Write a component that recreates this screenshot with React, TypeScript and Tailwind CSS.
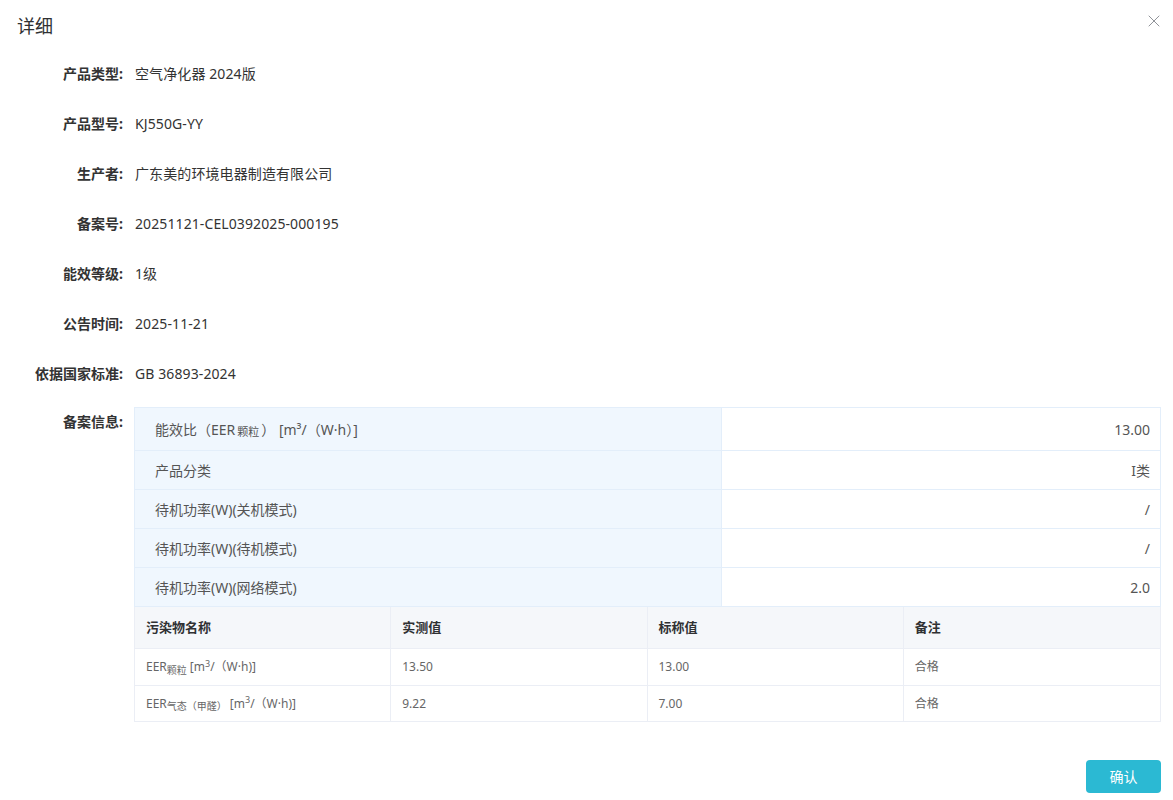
import { X } from 'lucide-react'

const info: [string, string][] = [
  ['产品类型:', '空气净化器 2024版'],
  ['产品型号:', 'KJ550G-YY'],
  ['生产者:', '广东美的环境电器制造有限公司'],
  ['备案号:', '20251121-CEL0392025-000195'],
  ['能效等级:', '1级'],
  ['公告时间:', '2025-11-21'],
  ['依据国家标准:', 'GB 36893-2024'],
]

const specs: [React.ReactNode, string][] = [
  ['产品分类', 'I类'],
  ['待机功率(W)(关机模式)', '/'],
  ['待机功率(W)(待机模式)', '/'],
  ['待机功率(W)(网络模式)', '2.0'],
]

export default function App() {
  return (
    <div
      className="relative w-[1173px] h-[800px] bg-white text-[#333]"
      style={{ fontFamily: '"Noto Sans", "Noto Sans CJK SC", sans-serif' }}
    >
      <div className="h-[48px] pl-[17px] pt-[13px]">
        <h1 className="text-[18px] leading-[26px] text-[#303133]">详细</h1>
      </div>
      <button className="absolute right-[9px] top-[11px] text-[#909399]">
        <X size={20} strokeWidth={1.2} />
      </button>

      {info.map(([label, value]) => (
        <div key={label} className="flex h-[50px] items-center text-[14px]">
          <div className="w-[123px] text-right font-bold text-[#333]">{label}</div>
          <div className="ml-[12px] tracking-[0.1px] text-[#333]">{value}</div>
        </div>
      ))}

      <div className="mt-[9px] flex text-[14px]">
        <div className="w-[123px] pt-[5px] text-right font-bold leading-[20px]">备案信息:</div>
        <div className="ml-[11px] w-[1027px]">
          <div className="border border-b-0 border-[#e3eefa] text-[#555]">
            <div className="flex h-[43px] border-b border-[#e3eefa]">
              <div className="flex w-[587px] items-center border-r border-[#e3eefa] bg-[#f0f7fe] pl-[20px]">
                能效比（EER <sub className="mx-[2px] text-[11px]">颗粒</sub> ） [m³/（W·h）]
              </div>
              <div className="flex flex-1 items-center justify-end pr-[10px]">13.00</div>
            </div>
            {specs.map(([k, v], i) => (
              <div key={i} className="flex h-[39px] border-b border-[#e3eefa]">
                <div className="flex w-[587px] items-center border-r border-[#e3eefa] bg-[#f0f7fe] pl-[20px]">
                  {k}
                </div>
                <div className="flex flex-1 items-center justify-end pr-[10px]">{v}</div>
              </div>
            ))}
          </div>

          <div className="border border-t-0 border-[#ebeef5]">
            <div className="grid h-[42px] grid-cols-4 border-b border-[#ebeef5] bg-[#f5f7fa] text-[13px] font-bold text-[#303133]">
              {['污染物名称', '实测值', '标称值', '备注'].map((h, i) => (
                <div key={h} className={`flex items-center pl-[11px] ${i < 3 ? 'border-r border-[#ebeef5]' : ''}`}>
                  {h}
                </div>
              ))}
            </div>
            <div className="grid h-[37px] grid-cols-4 border-b border-[#ebeef5] text-[12px] text-[#666]">
              <div className="flex items-center border-r border-[#ebeef5] pl-[11px]">
                EER<sub className="text-[10px]">颗粒</sub>
                <span className="ml-[3px]">[m<sup className="text-[9px]">3</sup>/（W·h)]</span>
              </div>
              <div className="flex items-center border-r border-[#ebeef5] pl-[11px]">13.50</div>
              <div className="flex items-center border-r border-[#ebeef5] pl-[11px]">13.00</div>
              <div className="flex items-center pl-[11px]">合格</div>
            </div>
            <div className="grid h-[35px] grid-cols-4 text-[12px] text-[#666]">
              <div className="flex items-center border-r border-[#ebeef5] pl-[11px]">
                EER<sub className="text-[10px]">气态（甲醛）</sub>
                <span className="ml-[3px]">[m<sup className="text-[9px]">3</sup>/（W·h)]</span>
              </div>
              <div className="flex items-center border-r border-[#ebeef5] pl-[11px]">9.22</div>
              <div className="flex items-center border-r border-[#ebeef5] pl-[11px]">7.00</div>
              <div className="flex items-center pl-[11px]">合格</div>
            </div>
          </div>
        </div>
      </div>

      <div className="mt-[38px] flex justify-end pr-[12px]">
        <button className="h-[33px] w-[75px] rounded-[4px] bg-[#2bb9d3] text-[14px] text-white">确认</button>
      </div>
    </div>
  )
}
